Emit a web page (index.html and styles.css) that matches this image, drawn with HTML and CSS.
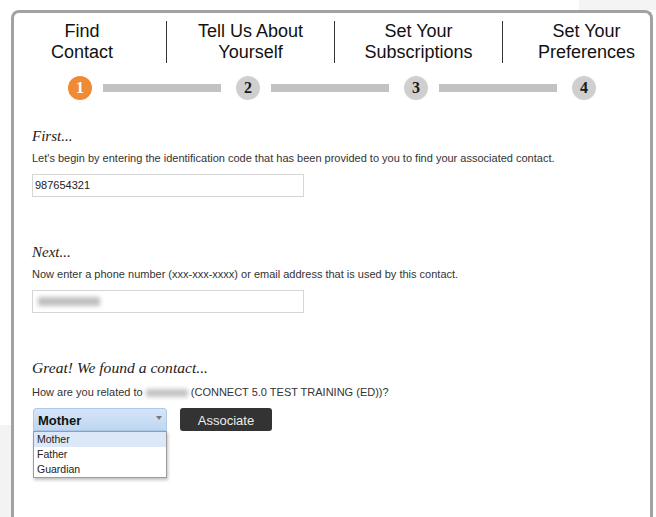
FILE: index.html
```html
<!DOCTYPE html>
<html lang="en">
<head>
<meta charset="utf-8">
<title>Find Contact</title>
<link rel="stylesheet" href="styles.css">
</head>
<body>
<div class="panel">
  <ol class="tabs">
    <li>Find<br>Contact</li>
    <li>Tell Us About<br>Yourself</li>
    <li>Set Your<br>Subscriptions</li>
    <li>Set Your<br>Preferences</li>
  </ol>

  <div class="steps">
    <span class="dot active">1</span><span class="bar"></span>
    <span class="dot">2</span><span class="bar"></span>
    <span class="dot">3</span><span class="bar"></span>
    <span class="dot">4</span>
  </div>

  <section class="step">
    <h2>First...</h2>
    <p>Let's begin by entering the identification code that has been provided to you to find your associated contact.</p>
    <div class="field">987654321</div>
  </section>

  <section class="step">
    <h2>Next...</h2>
    <p>Now enter a phone number (xxx-xxx-xxxx) or email address that is used by this contact.</p>
    <div class="field"><span class="hidden-value wide"></span></div>
  </section>

  <section class="step found">
    <h2>Great! We found a contact...</h2>
    <p>How are you related to <span class="hidden-value name"></span> (CONNECT 5.0 TEST TRAINING (ED))?</p>
    <div class="actions">
      <div class="select">
        <div class="select-current"><span>Mother</span><span class="caret"></span></div>
        <ul class="options">
          <li class="selected">Mother</li>
          <li>Father</li>
          <li>Guardian</li>
        </ul>
      </div>
      <button class="btn" type="button">Associate</button>
    </div>
  </section>
</div>
</body>
</html>
```

FILE: styles.css
```css
* { box-sizing: border-box; }

html, body { margin: 0; padding: 0; }

body {
  width: 656px;
  height: 517px;
  overflow: hidden;
  font-family: "Liberation Sans", Arial, sans-serif;
  color: #222;
  background:
    linear-gradient(#f3f3f3, #f3f3f3) 0 425px / 11px 100% no-repeat,
    linear-gradient(#f4f4f4, #f4f4f4) 579px 0 / 77px 10px no-repeat,
    #fff;
}

/* wizard frame */
.panel {
  margin: 10px 3px 0 11px;
  height: 507px;
  padding: 8px 0 0 18px;
  background: #fff;
  border: 3px solid #a2a2a2;
  border-bottom: none;
  border-radius: 8px 8px 0 0;
}

/* step titles */
.tabs {
  list-style: none;
  margin: 0 0 0 -34px;
  padding: 0;
  display: grid;
  grid-template-columns: repeat(4, 168px);
}

.tabs li {
  height: 42px;
  font-size: 18px;
  line-height: 21px;
  text-align: center;
  color: #111;
}

.tabs li + li { border-left: 1px solid #333; }

/* progress track */
.steps {
  display: flex;
  align-items: center;
  margin: 13px 0 0 36px;
  height: 24px;
}

.dot {
  flex: none;
  width: 24px;
  height: 24px;
  border-radius: 50%;
  background: #cfcfcf;
  color: #1a1a1a;
  font: bold 16px/24px "Liberation Serif", "Times New Roman", serif;
  text-align: center;
}

.dot.active {
  background: #f08a33;
  color: #fff;
}

.bar {
  flex: none;
  width: 118px;
  height: 8px;
  margin: 0 15px 0 11px;
  background: #c2c2c2;
}

/* form sections */
.step { margin-top: 27px; }
.step + .step { margin-top: 46px; }

.step h2 {
  margin: 0 0 7px;
  font: italic normal 15px/18px "Liberation Serif", "Times New Roman", serif;
  color: #222;
}

.step p {
  margin: 0 0 9px;
  font-size: 11px;
  line-height: 13px;
  color: #333;
}

.step.found h2 {
  font-size: 15.6px;
  margin-bottom: 9px;
}

.step.found p { margin-bottom: 9px; }

.field {
  width: 272px;
  height: 23px;
  padding: 0 2px;
  border: 1px solid #d6d6d6;
  font-size: 11px;
  line-height: 21px;
  color: #222;
}

.hidden-value {
  display: inline-block;
  background: #b9b9b9;
  filter: blur(2px);
}

.hidden-value.wide {
  width: 62px;
  height: 9px;
  margin: 6px 0 0 3px;
  vertical-align: top;
  background: #c0c0c0;
}

.hidden-value.name {
  width: 42px;
  height: 8px;
  vertical-align: -1px;
  background: #c4c4c4;
}

/* relationship picker */
.actions {
  display: flex;
  gap: 13px;
  align-items: flex-start;
  padding-left: 1px;
}

.select {
  position: relative;
  width: 134px;
}

.select-current {
  height: 23px;
  display: flex;
  align-items: center;
  justify-content: space-between;
  padding: 1px 4px 0 4px;
  border: 1px solid #afcae9;
  border-radius: 3px 3px 0 0;
  background: linear-gradient(#d5e5f8, #bfd7f1);
  font-weight: bold;
  font-size: 13px;
  color: #111;
}

.caret {
  width: 0;
  height: 0;
  border-left: 3px solid transparent;
  border-right: 3px solid transparent;
  border-top: 4px solid #7a7a7a;
  margin: -4px 0 0 0;
}

.options {
  position: absolute;
  top: 23px;
  left: 0;
  width: 134px;
  margin: 0;
  padding: 0;
  list-style: none;
  background: #fff;
  border: 1px solid #9c9c9c;
  box-shadow: 1px 2px 3px rgba(0, 0, 0, 0.25);
}

.options li {
  height: 15px;
  padding-left: 3px;
  font-size: 10.5px;
  line-height: 15px;
  color: #222;
}

.options li.selected { background: #dce8f8; }

.btn {
  width: 92px;
  height: 23px;
  padding: 1px 0 0;
  border: none;
  border-radius: 3px;
  background: #333;
  color: #eee;
  font-family: "Liberation Sans", Arial, sans-serif;
  font-size: 13px;
}
```
